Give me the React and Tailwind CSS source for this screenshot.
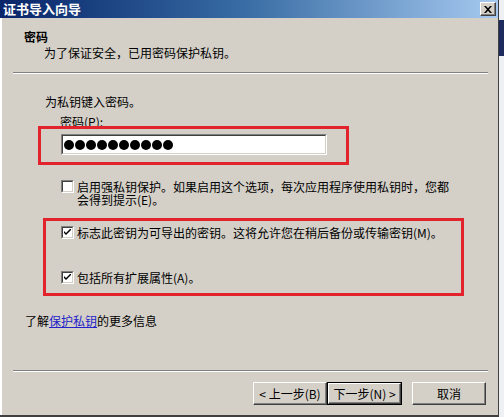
import React from "react";

const font = { fontFamily: '"Noto Sans CJK SC", "Noto Sans", sans-serif' };

function CheckBox({ checked }) {
  return (
    <div className="w-[13px] h-[13px] shrink-0 border border-t-[#808080] border-l-[#808080] border-b-white border-r-white">
      <div className="w-full h-full bg-white border border-t-[#404040] border-l-[#404040] border-b-[#d4d0c8] border-r-[#d4d0c8] flex items-center justify-center">
        {checked && (
          <svg width="7" height="7" viewBox="0 0 7 7">
            <path d="M0 2 L0 4 L2 6 L7 1 L7 -1 L2 4 Z" fill="#000" />
          </svg>
        )}
      </div>
    </div>
  );
}

function Button({ children, focused }) {
  const inner = (
    <div className="w-full h-full flex items-center justify-center border border-t-white border-l-white border-r-[#404040] border-b-[#404040] shadow-[inset_-1px_-1px_0_#808080] text-[12px] text-black">
      {children}
    </div>
  );
  if (focused) {
    return <div className="w-[75px] h-[23px] border border-black">{inner}</div>;
  }
  return <div className="w-[74px] h-[23px]">{inner}</div>;
}

export default function App() {
  return (
    <div className="w-[504px] h-[417px] flex bg-[#d4d0c8] overflow-hidden" style={font}>
      <div className="w-[499px] h-[417px] flex flex-col border-r border-r-[#404040] border-b-2 border-b-[#404040]">
        {/* Title bar */}
        <div className="h-[18px] shrink-0 flex items-center justify-between bg-gradient-to-r from-[#0a246a] via-[#3a6ea5] to-[#a6caf0] pl-[3px] pr-[2px]">
          <span className="text-white font-bold text-[13px] leading-[18px]">证书导入向导</span>
          <div className="w-[16px] h-[14px] bg-[#d4d0c8] border border-t-white border-l-white border-r-[#404040] border-b-[#404040] shadow-[inset_-1px_-1px_0_#808080] flex items-center justify-center">
            <svg width="8" height="7" viewBox="0 0 8 7">
              <path d="M0 0 L2 0 L4 2.2 L6 0 L8 0 L5 3.5 L8 7 L6 7 L4 4.8 L2 7 L0 7 L3 3.5 Z" fill="#000" />
            </svg>
          </div>
        </div>

        {/* Body */}
        <div className="relative flex-1 flex flex-col text-[12px] text-black border-l-2 border-l-white">
          <div className="pl-[22px] pt-[11px] font-bold leading-[16px]">密码</div>
          <div className="pl-[42px] leading-[16px]">为了保证安全，已用密码保护私钥。</div>

          <div className="ml-[11px] mt-[11px] w-[475px] h-[2px] border-t border-t-[#808080] border-b border-b-white" />

          <div className="pl-[43px] mt-[20px] leading-[16px]">为私钥键入密码。</div>
          <div className="pl-[58px] mt-[4px] leading-[16px]">密码(P):</div>

          <div className="ml-[59px] mt-[4px] w-[266px] h-[21px] border border-t-[#808080] border-l-[#808080] border-b-white border-r-white">
            <div className="w-full h-full bg-white border border-t-[#404040] border-l-[#404040] border-b-[#d4d0c8] border-r-[#d4d0c8] flex items-center pl-[1px] gap-[1px]">
              {Array.from({ length: 10 }).map((_, i) => (
                <span key={i} className="w-[10px] h-[10px] rounded-full bg-black inline-block" />
              ))}
            </div>
          </div>

          <div className="ml-[59px] mt-[25px] flex items-start gap-[3px]">
            <CheckBox checked={false} />
            <div className="leading-[13px]">
              启用强私钥保护。如果启用这个选项，每次应用程序使用私钥时，您都
              <br />
              会得到提示(E)。
            </div>
          </div>

          <div className="ml-[59px] mt-[20px] flex items-start gap-[3px]">
            <CheckBox checked={true} />
            <div className="leading-[13px]">标志此密钥为可导出的密钥。这将允许您在稍后备份或传输密钥(M)。</div>
          </div>

          <div className="ml-[59px] mt-[32px] flex items-start gap-[3px]">
            <CheckBox checked={true} />
            <div className="leading-[13px]">包括所有扩展属性(A)。</div>
          </div>

          <div className="pl-[23px] mt-[29px] leading-[16px]">
            了解<span className="text-[#2323c8] underline">保护私钥</span>的更多信息
          </div>

          <div className="ml-[11px] mt-[41px] w-[475px] h-[2px] border-t border-t-[#808080] border-b border-b-white" />

          <div className="mt-[10px] flex items-start pl-[251px]">
            <Button>&lt; 上一步(B)</Button>
            <Button focused>下一步(N) &gt;</Button>
            <div className="w-[10px]" />
            <Button>取消</Button>
          </div>

          {/* Annotation boxes */}
          <div className="absolute left-[36px] top-[108px] w-[311px] h-[39px] border-[3px] border-[#e3232c] pointer-events-none" />
          <div className="absolute left-[41px] top-[200px] w-[421px] h-[78px] border-[3px] border-[#e3232c] pointer-events-none" />
        </div>
      </div>
      <div className="w-[5px] h-[417px] bg-[#eef0f4] flex flex-col">
        <div className="h-[20px]" />
        <div className="h-[36px] bg-[#1c2a5c]" />
      </div>
    </div>
  );
}
